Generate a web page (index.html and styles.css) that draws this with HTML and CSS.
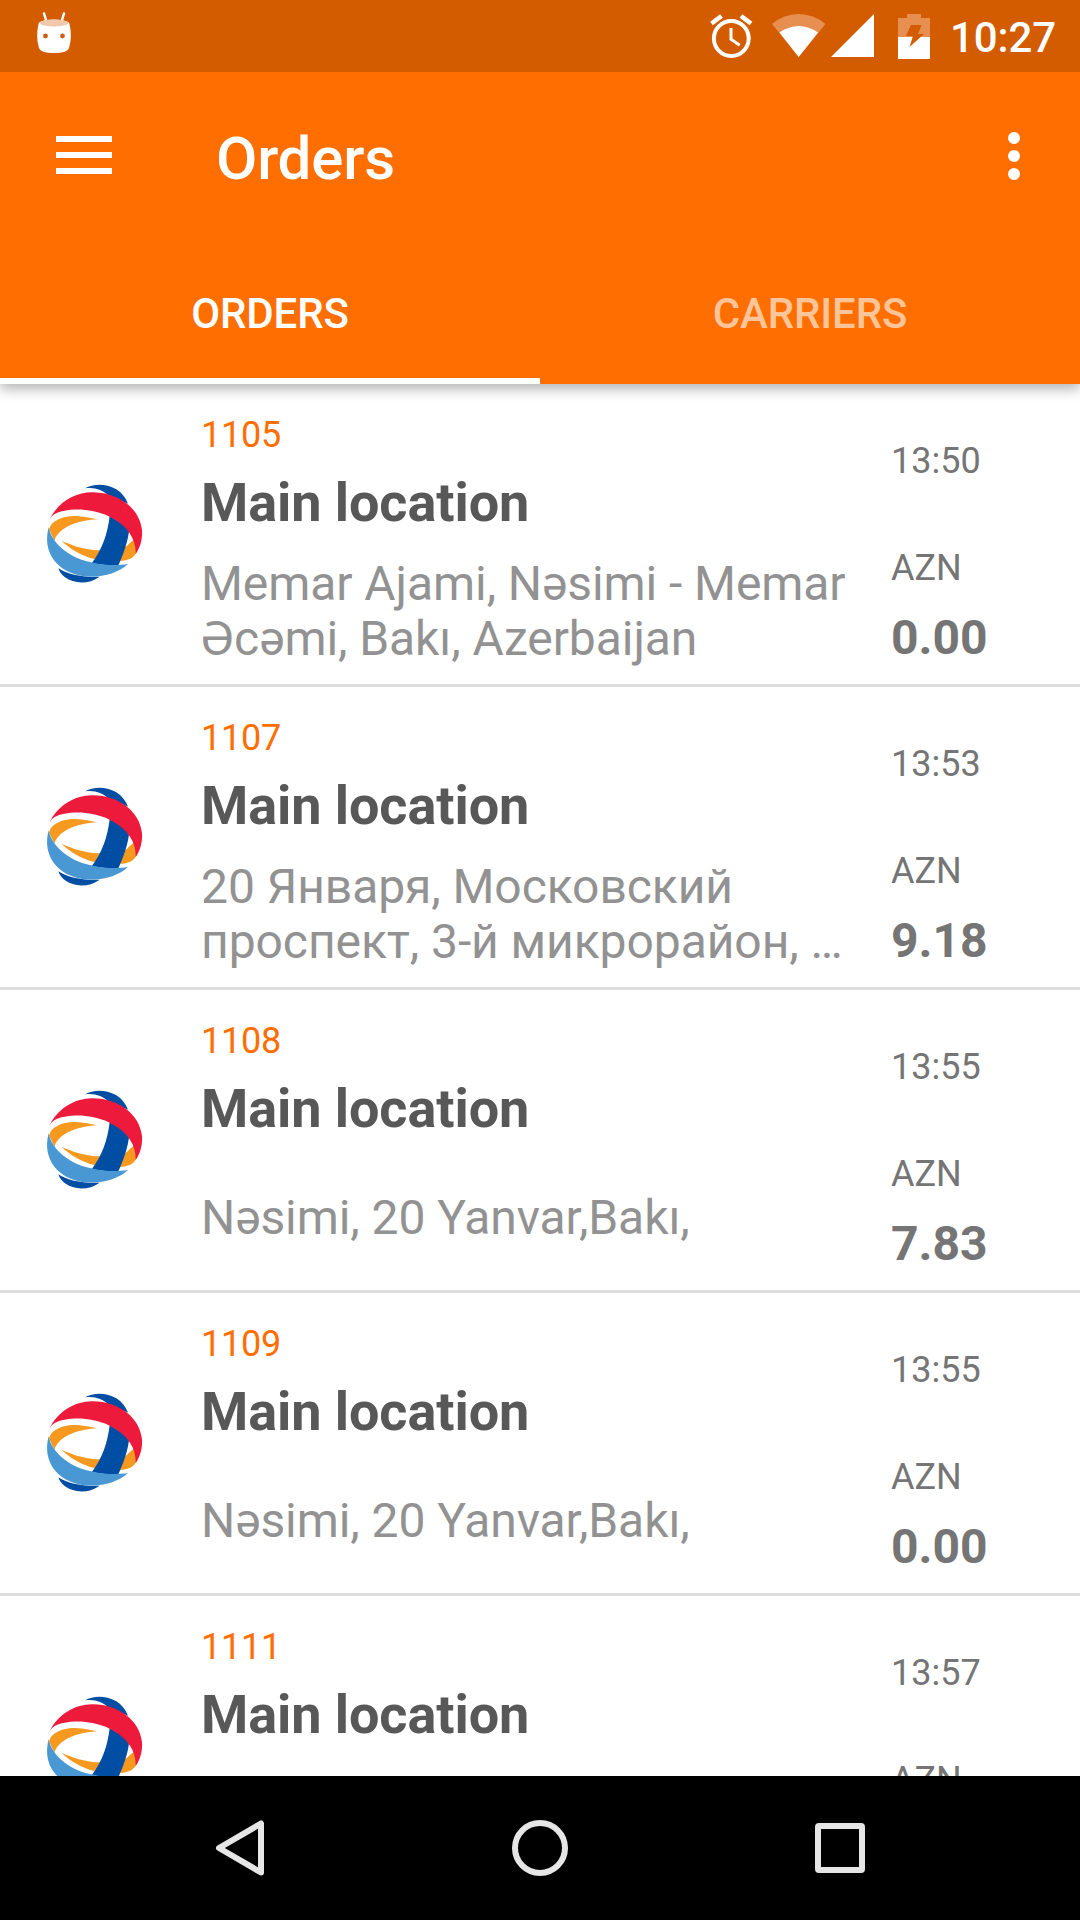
FILE: index.html
```html
<!DOCTYPE html>
<html lang="en">
<head>
  <meta charset="UTF-8"/>
  <meta name="viewport" content="width=device-width, initial-scale=1.0"/>
  <title>Orders</title>
  <link rel="stylesheet" href="styles.css">
</head>
<body>
  <!-- courier logo, reused in every row -->
  <svg class="defs" width="0" height="0">
    <symbol id="logo" viewBox="30 30 324 324">
      <path fill="#004ea4" d="M168 55 C196 38 237 42 262 58 C278 68 290 83 297 101 L238 76 C220 60 198 51 168 55 Z"/>
      <path fill="#f7981f" d="M60 178 C66 152 104 136 140 138 C164 139 184 143 205 148 C158 151 92 165 76 212 Z"/>
      <path fill="#f7981f" d="M98 212 C132 228 166 238 206 241 C250 243 292 230 322 204 L323 246 C314 266 292 274 266 272 L192 266 C158 256 124 238 98 212 Z"/>
      <path fill="#fff" d="M296 180 L315 203 C303 222 288 234 272 240 Z"/>
      <path fill="#004ea4" d="M242 138 L301 174 C298 212 284 252 266 290 L188 280 C220 238 236 190 242 138 Z"/>
      <path fill="#004ea4" d="M88 295 C118 315 166 323 212 320 C180 343 136 343 108 322 C98 314 91 305 88 295 Z"/>
      <path fill="#4a98d3" d="M59 172 C68 222 126 268 196 279 C232 287 268 286 297 282 C264 312 212 325 160 318 C88 307 38 250 59 172 Z"/>
      <path fill="#ed1a3b" d="M61 150 C84 100 136 66 192 67 C270 68 332 116 339 180 C341 208 333 234 320 252 C322 208 296 166 242 140 C184 112 112 114 77 132 C70 137 65 142 61 150 Z"/>
    </symbol>
  </svg>

  <div class="screen">
    <header class="header">
      <div class="status-bar">
        <svg class="android" width="36" height="42" viewBox="0 0 36 42">
          <path d="M8 1.500l2.500 8M28 1.500l-2.500 8" stroke="#fff" stroke-width="2.500" stroke-linecap="round"/>
          <path d="M2.500 12Q3 8 18 7.500Q33 8 33.500 12Q36.500 25 33 36Q32 41 18 41Q4 41 3 36Q-.5 25 2.500 12z" fill="#fff"/>
          <ellipse cx="18" cy="11" rx="14" ry="3.600" fill="#f0c8ad"/>
          <circle cx="9.500" cy="24" r="2.400" fill="#c8601a"/>
          <circle cx="26.500" cy="24" r="2.400" fill="#c8601a"/>
        </svg>
        <div class="status-icons">
          <svg class="alarm" width="44" height="46" viewBox="0 0 44 46" fill="none" stroke="#fff">
            <circle cx="22.300" cy="25.500" r="17.400" stroke-width="4"/>
            <path d="M22 15v11.200l8.700 6" stroke-width="3"/>
            <path d="M2.500 10.500L12.500 3M42 10.500L32 3" stroke-width="4.600"/>
          </svg>
          <svg class="wifi" width="54" height="44" viewBox="0 0 54 44">
            <path d="M0 10Q12 0 26.700 0T53.500 10L26.700 43z" fill="#e68f50"/>
            <path d="M7.500 18.500Q17 12 26.700 12T46 18.500L26.700 43z" fill="#fff"/>
          </svg>
          <svg class="signal" width="43" height="43" viewBox="0 0 43 43"><path d="M43 0v43H0z" fill="#fff"/></svg>
          <svg class="battery" width="32" height="45" viewBox="0 0 32 45">
            <path d="M0 4h9V0h14v4h9v19H0z" fill="#e68f50"/>
            <path d="M0 23h32v22H0z" fill="#fff"/>
            <path d="M13 11h10.500l-3.500 9h6L11.500 33l3.500-11H8z" fill="#d35b00"/>
          </svg>
          <span class="clock">10:27</span>
        </div>
      </div>

      <div class="toolbar">
        <svg class="menu" width="56" height="38" viewBox="0 0 56 38"><path d="M0 0h56v6H0zM0 16h56v6H0zM0 32h56v6H0z" fill="#fff"/></svg>
        <h1>Orders</h1>
        <svg class="more" width="12" height="48" viewBox="0 0 12 48" fill="#fff">
          <circle cx="6" cy="6" r="6"/><circle cx="6" cy="24" r="6"/><circle cx="6" cy="42" r="6"/>
        </svg>
      </div>

      <nav class="tabs">
        <div class="tab active">ORDERS</div>
        <div class="tab">CARRIERS</div>
      </nav>
    </header>

    <main class="list">
      <div class="order">
        <svg class="logo"><use href="#logo"/></svg>
        <div class="info">
          <div class="number">1105</div>
          <h2>Main location</h2>
          <div class="address"><p>Memar Ajami, Nəsimi - Memar Əcəmi, Bakı, Azerbaijan</p></div>
        </div>
        <div class="side">
          <div class="time">13:50</div>
          <div class="currency">AZN</div>
          <div class="price">0.00</div>
        </div>
      </div>

      <div class="order">
        <svg class="logo"><use href="#logo"/></svg>
        <div class="info">
          <div class="number">1107</div>
          <h2>Main location</h2>
          <div class="address"><p>20 Января, Московский<br>проспект, 3-й микрорайон, …</p></div>
        </div>
        <div class="side">
          <div class="time">13:53</div>
          <div class="currency">AZN</div>
          <div class="price">9.18</div>
        </div>
      </div>

      <div class="order">
        <svg class="logo"><use href="#logo"/></svg>
        <div class="info">
          <div class="number">1108</div>
          <h2>Main location</h2>
          <div class="address"><p>Nəsimi, 20 Yanvar,Bakı,</p></div>
        </div>
        <div class="side">
          <div class="time">13:55</div>
          <div class="currency">AZN</div>
          <div class="price">7.83</div>
        </div>
      </div>

      <div class="order">
        <svg class="logo"><use href="#logo"/></svg>
        <div class="info">
          <div class="number">1109</div>
          <h2>Main location</h2>
          <div class="address"><p>Nəsimi, 20 Yanvar,Bakı,</p></div>
        </div>
        <div class="side">
          <div class="time">13:55</div>
          <div class="currency">AZN</div>
          <div class="price">0.00</div>
        </div>
      </div>

      <div class="order">
        <svg class="logo"><use href="#logo"/></svg>
        <div class="info">
          <div class="number">1111</div>
          <h2>Main location</h2>
        </div>
        <div class="side">
          <div class="time">13:57</div>
          <div class="currency">AZN</div>
        </div>
      </div>
    </main>

    <footer class="nav-bar">
      <svg width="60" height="60" viewBox="0 0 60 60"><path d="M51 5.500v49L9 30z"/></svg>
      <svg width="60" height="60" viewBox="0 0 60 60"><circle cx="30" cy="30" r="25"/></svg>
      <svg width="60" height="60" viewBox="0 0 60 60"><rect x="8" y="8" width="44" height="44" rx="1"/></svg>
    </footer>
  </div>
</body>
</html>
```

FILE: styles.css
```css
* { box-sizing:border-box; }
body { margin:0; background:#fff; font-family:Roboto, "Noto Sans", sans-serif; }
h1, h2, p { margin:0; }
svg { display:block; flex:none; }
.defs { position:absolute; }
.screen { width:1080px; height:1920px; display:flex; flex-direction:column; overflow:hidden; }

.header { position:relative; z-index:1; flex:none; height:384px; background:#ff6e00; color:#fff; box-shadow:0 5px 12px rgba(0,0,0,0.3); }
.status-bar { height:72px; padding:0 24px 0 36px; display:flex; justify-content:space-between; background:#d35b00; }
.android { margin-top:12px; }
.status-icons { display:flex; align-items:flex-start; }
.alarm { margin:13px 19px 0 0; }
.wifi { margin:14px 5px 0 0; }
.signal { margin:14px 24px 0 0; }
.battery { margin:14px 20px 0 0; }
.clock { font-size:42px; font-weight:500; line-height:50px; margin-top:13px; letter-spacing:-0.1px; }

.toolbar { height:168px; padding:0 60px 0 56px; display:flex; align-items:center; }
.menu { margin-bottom:2px; }
.toolbar h1 { flex:1; margin-left:104px; font-size:60px; font-weight:500; line-height:70px; padding-top:6px; letter-spacing:-0.2px; }
.tabs { height:144px; display:flex; }
.tab { flex:1; text-align:center; font-size:42px; font-weight:500; line-height:50px; padding-top:49px; color:rgba(255,255,255,0.6); letter-spacing:-0.15px; }
.tab.active { color:#fff; border-bottom:6px solid #fff; }

.list { flex:1; min-height:0; overflow:hidden; }
.order { height:303px; display:flex; border-bottom:3px solid #dedede; }
.logo { width:108px; height:108px; margin:96px 54px 0 39px; }
.info { width:690px; padding-top:30px; }
.number { font-size:36px; line-height:42px; color:#ff6e00; letter-spacing:-0.2px; }
.info h2 { margin-top:15px; font-size:54px; line-height:64px; color:#585858; letter-spacing:-0.08px; }
.address { width:660px; height:110px; margin-top:21px; display:flex; align-items:center; }
.address p { font-size:48px; line-height:55px; color:#929292; letter-spacing:-0.07px; }
.side { padding-top:56px; color:#757575; }
.time, .currency { font-size:36px; line-height:42px; }
.currency { margin-top:65px; }
.price { margin-top:21px; font-size:48px; font-weight:bold; line-height:56px; }

.nav-bar { flex:none; height:144px; padding:0 210px; display:flex; justify-content:space-between; align-items:center; background:#000; }
.nav-bar svg { fill:none; stroke:#e6e6e6; stroke-width:6; stroke-linejoin:round; }
```
